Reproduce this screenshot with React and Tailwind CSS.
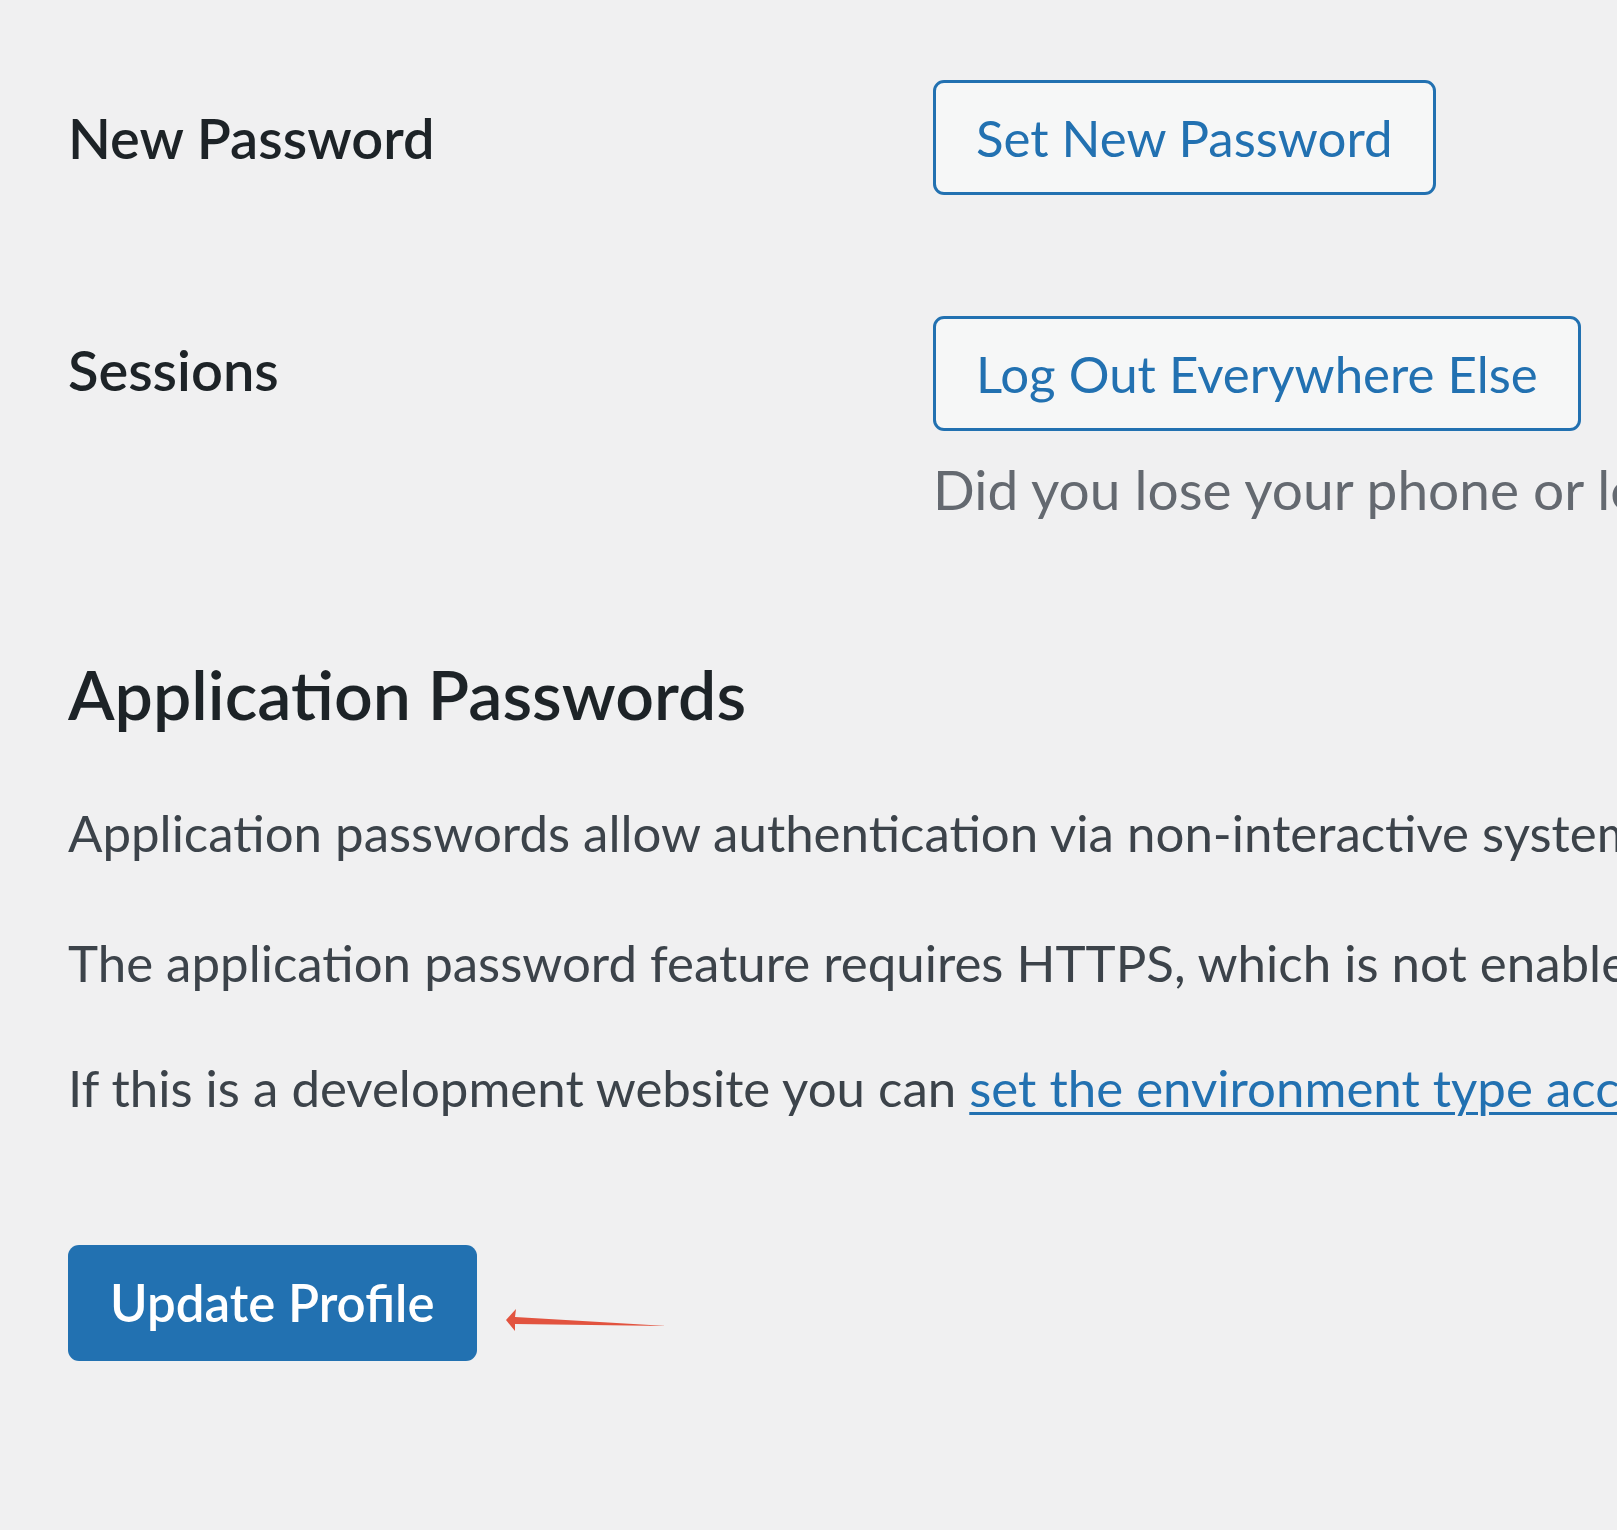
export default function App() {
  return (
    <div className="h-[1530px] w-[1617px] overflow-hidden bg-[#f0f0f1] font-['Lato',sans-serif] text-[#3c434a]">
      <main className="pl-[68px] pt-[80px]">
        {/* New Password */}
        <div className="flex items-start">
          <div className="w-[865px] shrink-0 pt-[18px] text-[56px] font-semibold leading-[80px] text-[#1d2327]">New Password</div>
          <button className="flex h-[115px] shrink-0 items-center rounded-[11px] border-[3px] border-[#2271b1] bg-[#f6f7f7] px-[40px] text-[51px] leading-[72px] text-[#2271b1]">
            Set New Password
          </button>
        </div>

        {/* Sessions */}
        <div className="mt-[121px] flex items-start">
          <div className="w-[865px] shrink-0 pt-[14px] text-[56px] font-semibold leading-[80px] text-[#1d2327]">Sessions</div>
          <div className="min-w-0">
            <button className="flex h-[115px] items-center rounded-[11px] border-[3px] border-[#2271b1] bg-[#f6f7f7] px-[40px] text-[51px] leading-[72px] text-[#2271b1]">
              Log Out Everywhere Else
            </button>
            <p className="mt-[22px] whitespace-nowrap text-[55px] leading-[72px] text-[#646970]">
              Did you lose your phone or leave your account logged in at a public computer? You can log out everywhere else, and stay logged in here.
            </p>
          </div>
        </div>

        {/* Application Passwords */}
        <h2 className="mt-[124px] text-[68px] font-semibold leading-[90px] text-[#1d2327]">Application Passwords</h2>
        <p className="mt-[58px] whitespace-nowrap text-[51px] leading-[72px]">
          Application passwords allow authentication via non-interactive systems, such as XML-RPC or the REST API, without providing your actual password.
        </p>
        <p className="mt-[58px] whitespace-nowrap text-[51px] leading-[72px]">
          The application password feature requires HTTPS, which is not enabled on this site.
        </p>
        <p className="mt-[53px] whitespace-nowrap text-[51px] leading-[72px]">
          If this is a development website you can{" "}
          <a href="#" className="text-[#2271b1] underline decoration-[3px] underline-offset-[5px]">
            set the environment type accordingly
          </a>{" "}
          to enable application passwords.
        </p>

        {/* Submit */}
        <div className="mt-[121px] flex items-start">
          <button className="flex h-[116px] items-center rounded-[11px] bg-[#2271b1] px-[42px] text-[51px] font-semibold leading-[72px] text-white">
            Update Profile
          </button>
          <svg className="ml-[27px] mt-[62px]" width="166" height="26" viewBox="0 0 166 26">
            <polygon points="2,13 12,2 11,10 163,19 11,17 11,24" fill="#e2533f" />
          </svg>
        </div>
      </main>
    </div>
  );
}
